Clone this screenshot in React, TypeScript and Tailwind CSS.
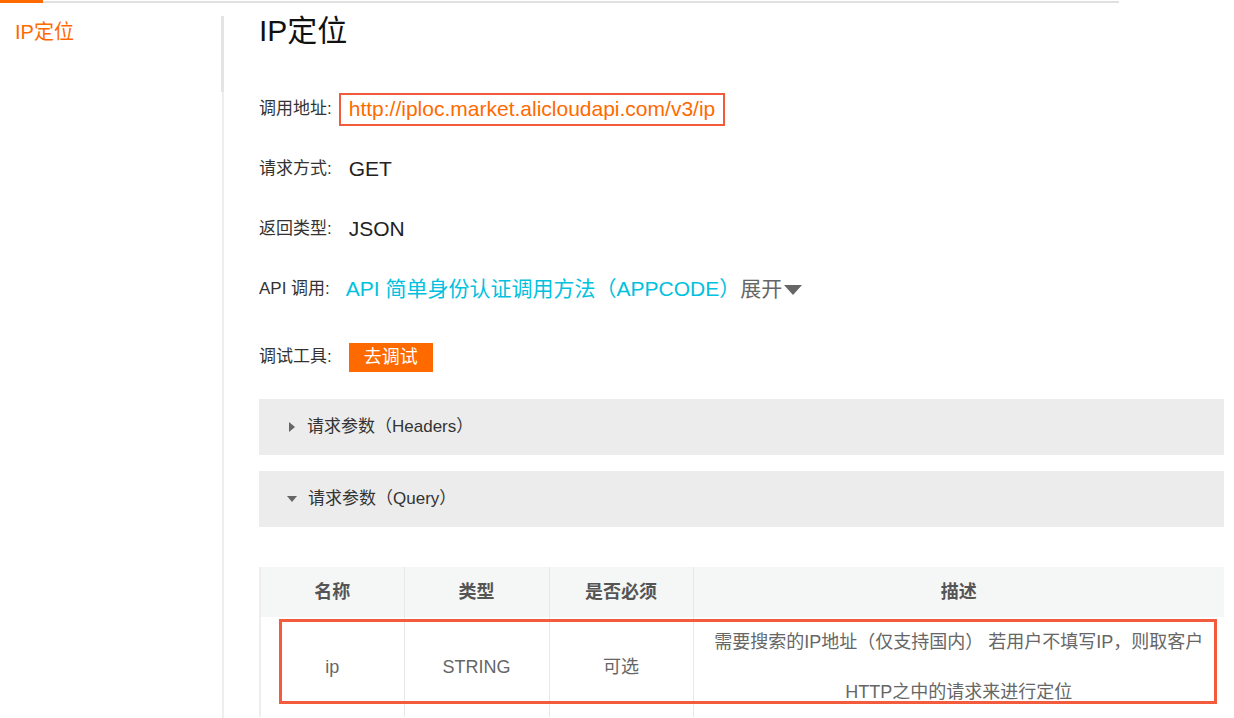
import type { ReactNode } from "react"

const font = {
  fontFamily: '"Liberation Sans", "Noto Sans CJK SC", sans-serif',
}

function Row({ label, children }: { readonly label: string; readonly children: ReactNode }) {
  return (
    <div className="flex h-[60px] items-center">
      <span className="text-[17px] text-[#333]">{label}</span>
      {children}
    </div>
  )
}

function Panel({ open, title }: { readonly open?: boolean; readonly title: string }) {
  return (
    <div className="flex h-[56px] items-center bg-[#ececec] pl-[28px] text-[17px] text-[#333]">
      {open ? (
        <span className="mr-[11px] h-0 w-0 border-x-[5px] border-t-[6px] border-x-transparent border-t-[#666]" />
      ) : (
        <span className="mr-[12px] ml-[2px] h-0 w-0 border-y-[5px] border-l-[6px] border-y-transparent border-l-[#666]" />
      )}
      {title}
    </div>
  )
}

export default function App() {
  return (
    <div className="h-[718px] overflow-hidden bg-white" style={font}>
      <div className="flex h-[3px] w-[1119px]">
        <div className="h-[3px] w-[43px] bg-[#ff6a00]" />
        <div className="mt-[1px] h-[2px] flex-1 bg-[#e0e0e0]" />
      </div>

      <div className="flex h-[715px]">
        <aside className="w-[221px] pt-[15px] pl-[15px]">
          <div className="text-[20px] leading-[28px] text-[#ff6a00]">IP定位</div>
        </aside>

        <div className="mt-[13px] flex w-[3px] flex-col">
          <div className="h-[76px] w-[3px] bg-[#e4e4e4]" />
          <div className="ml-[1px] w-[2px] flex-1 bg-[#eeeeee]" />
        </div>

        <main className="flex-1 pr-[10px] pl-[35px]">
          <h1 className="mt-[10px] text-[30px] leading-[36px] text-[#111]">IP定位</h1>

          <div className="mt-[30px]">
            <Row label="调用地址:">
              <span className="ml-[7px] flex h-[33px] items-center border-2 border-[#f25b3b] px-[8px] text-[21px] text-[#ff6a00]">
                http://iploc.market.alicloudapi.com/v3/ip
              </span>
            </Row>
            <Row label="请求方式:">
              <span className="ml-[17px] text-[21px] text-[#222]">GET</span>
            </Row>
            <Row label="返回类型:">
              <span className="ml-[17px] text-[21px] text-[#222]">JSON</span>
            </Row>
            <Row label="API 调用:">
              <span className="ml-[16px] text-[21px] text-[#00c1de]">API 简单身份认证调用方法（APPCODE）</span>
              <span className="text-[21px] text-[#666]">展开</span>
              <span className="mt-[2px] ml-[2px] h-0 w-0 border-x-[9px] border-t-[10px] border-x-transparent border-t-[#666]" />
            </Row>
            <div className="mt-[8px]">
              <Row label="调试工具:">
                <button
                  type="button"
                  className="ml-[17px] h-[29px] bg-[#ff6a00] px-[15px] text-[18px] leading-[29px] text-white"
                >
                  去调试
                </button>
              </Row>
            </div>
          </div>

          <div className="mt-[12px] flex flex-col gap-[16px]">
            <Panel title="请求参数（Headers）" />
            <Panel open title="请求参数（Query）" />
          </div>

          <div className="relative mt-[40px]">
            <table className="w-full table-fixed border-collapse border-l-2 border-[#eeeeee]">
              <colgroup>
                <col className="w-[144px]" />
                <col className="w-[145px]" />
                <col className="w-[144px]" />
                <col />
              </colgroup>
              <thead>
                <tr className="h-[50px] bg-[#f5f7f6] text-[18px] font-bold text-[#555]">
                  <th className="border-r border-[#e8e8e8] font-bold">名称</th>
                  <th className="border-r border-[#e8e8e8] font-bold">类型</th>
                  <th className="border-r border-[#e8e8e8] font-bold">是否必须</th>
                  <th className="font-bold">描述</th>
                </tr>
              </thead>
              <tbody>
                <tr className="text-center text-[18px] text-[#666]">
                  <td className="border-r border-[#e8e8e8]">ip</td>
                  <td className="border-r border-[#e8e8e8]">STRING</td>
                  <td className="border-r border-[#e8e8e8]">可选</td>
                  <td className="px-[10px] leading-[50px]">
                    需要搜索的IP地址（仅支持国内） 若用户不填写IP，则取客户
                    <br />
                    HTTP之中的请求来进行定位
                  </td>
                </tr>
              </tbody>
            </table>
            <div className="absolute top-[52px] left-[20px] h-[85px] w-[938px] border-[3px] border-[#f25b3b]" />
          </div>
        </main>
      </div>
    </div>
  )
}
